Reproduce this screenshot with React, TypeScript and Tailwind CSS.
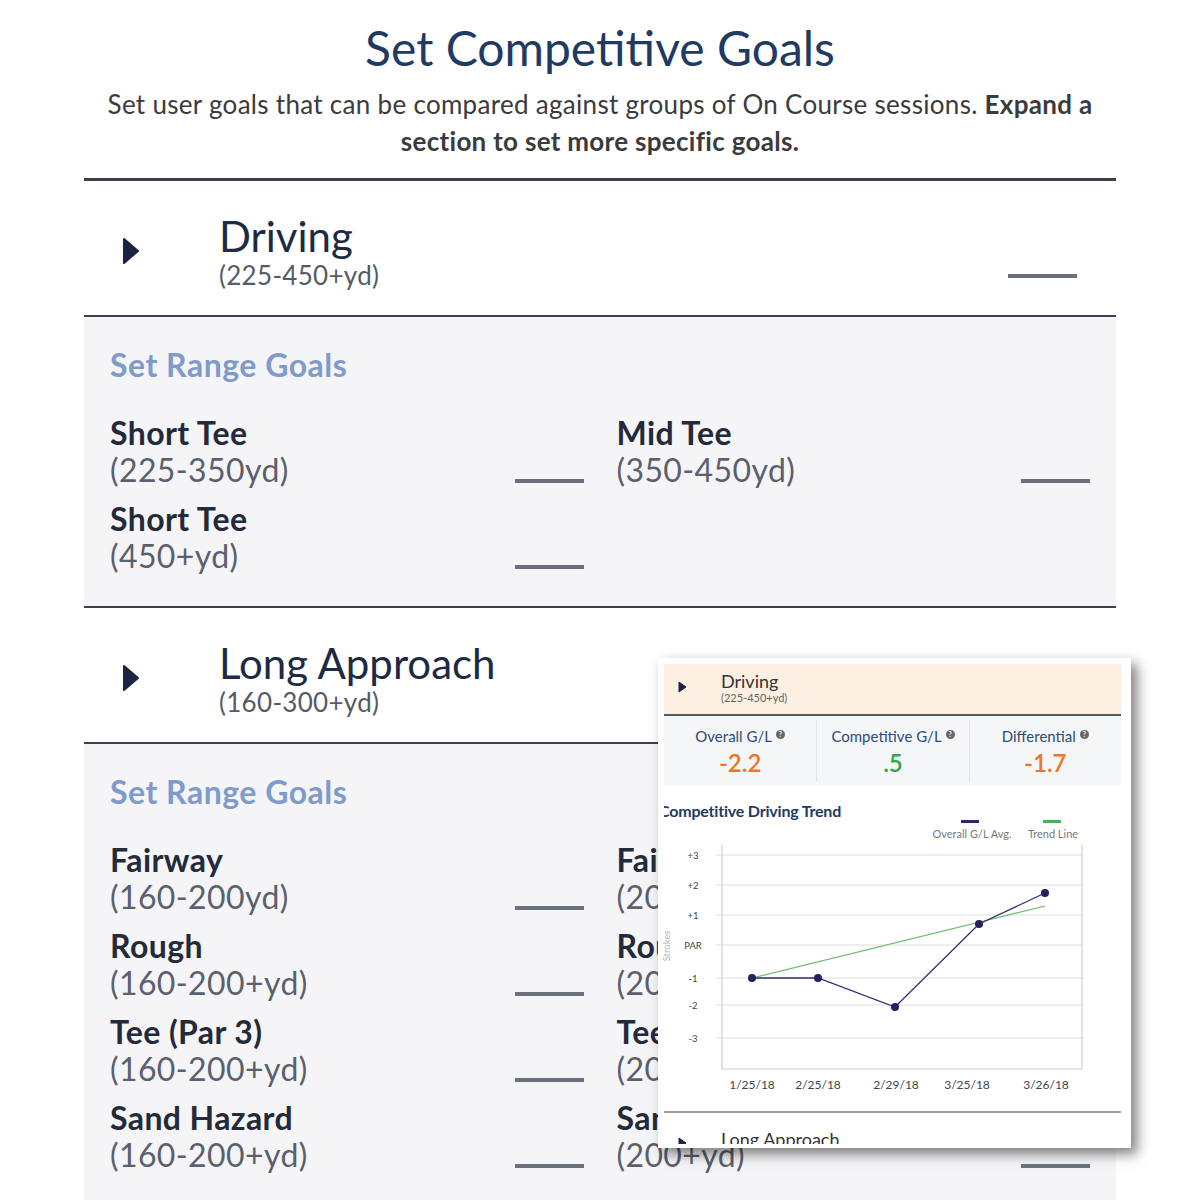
import React from 'react';

interface Goal {
  name: string;
  range: string;
}

interface SectionProps {
  title: string;
  range: string;
  goals: Goal[];
}

const drivingGoals: Goal[] = [
  { name: 'Short Tee', range: '(225-350yd)' },
  { name: 'Mid Tee', range: '(350-450yd)' },
  { name: 'Short Tee', range: '(450+yd)' },
];

const approachGoals: Goal[] = [
  { name: 'Fairway', range: '(160-200yd)' },
  { name: 'Fairway', range: '(200+yd)' },
  { name: 'Rough', range: '(160-200+yd)' },
  { name: 'Rough', range: '(200+yd)' },
  { name: 'Tee (Par 3)', range: '(160-200+yd)' },
  { name: 'Tee (Par 3)', range: '(200+yd)' },
  { name: 'Sand Hazard', range: '(160-200+yd)' },
  { name: 'Sand Hazard', range: '(200+yd)' },
];

function Caret({ small }: { small?: boolean }) {
  return small ? (
    <svg width="9" height="12" viewBox="0 0 9 12" className="shrink-0">
      <path d="M1 1 L8 6 L1 11 Z" fill="#1b2440" stroke="#1b2440" strokeLinejoin="round" />
    </svg>
  ) : (
    <svg width="18" height="28" viewBox="0 0 18 28" className="shrink-0">
      <path d="M2 2 L16 14 L2 26 Z" fill="#1b2440" stroke="#1b2440" strokeWidth="2" strokeLinejoin="round" />
    </svg>
  );
}

function Dash() {
  return <div className="h-[4px] w-[69px] shrink-0 bg-[#6b707d]" />;
}

function GoalRow({ name, range }: Goal) {
  return (
    <div className="flex items-end justify-between">
      <div>
        <div className="text-[32px] font-bold leading-[37px] tracking-[0.4px] text-[#232a3a]">{name}</div>
        <div className="text-[32px] leading-[37px] tracking-[0.4px] text-[#5a606c]">{range}</div>
      </div>
      <div className="mb-[5px]">
        <Dash />
      </div>
    </div>
  );
}

function Section({ title, range, goals }: SectionProps) {
  return (
    <div>
      <div className="flex h-[136px] items-start border-b-2 border-[#3b4150] pl-[38px] pr-[39px]">
        <div className="mt-[56px]">
          <Caret />
        </div>
        <div className="ml-[79px] flex-1 pt-[35px]">
          <div className="text-[42px] leading-[40px] text-[#1e2a44]">{title}</div>
          <div className="mt-[2px] text-[26px] leading-[34px] tracking-[0.3px] text-[#555b66]">{range}</div>
        </div>
        <div className="mt-[93px]">
          <Dash />
        </div>
      </div>
      <div className="border-b-2 border-[#3b4150] bg-[#f5f5f7] px-[26px] pb-[32px] pt-[28px]">
        <div className="text-[32px] font-bold leading-[40px] tracking-[0.5px] text-[#7f9bcb]">Set Range Goals</div>
        <div className="mt-[29px] grid grid-cols-2 gap-x-[33px] gap-y-[12px]">
          {goals.map((g, i) => (
            <GoalRow key={i} name={g.name} range={g.range} />
          ))}
        </div>
      </div>
    </div>
  );
}

function HelpDot() {
  return (
    <span className="ml-[4px] inline-flex h-[9px] w-[9px] -translate-y-[5px] items-center justify-center rounded-full bg-[#666] text-[7px] font-bold leading-none text-white">
      ?
    </span>
  );
}

function Stat({ label, value, color, first }: { label: string; value: string; color: string; first?: boolean }) {
  return (
    <div className={first ? 'flex flex-col items-center pt-[6px]' : 'flex flex-col items-center border-l border-[#e4e4e8] pt-[6px]'}>
      <div className="text-[15px] leading-[20px] text-[#2d4b74]">
        {label}
        <HelpDot />
      </div>
      <div className={`text-[24px] font-semibold leading-[34px] ${color}`}>{value}</div>
    </div>
  );
}

const yTicks = [
  { label: '+3', y: 36 },
  { label: '+2', y: 66 },
  { label: '+1', y: 96 },
  { label: 'PAR', y: 126 },
  { label: '-1', y: 159 },
  { label: '-2', y: 186 },
  { label: '-3', y: 219 },
];

const dates = [
  { label: '1/25/18', x: 94 },
  { label: '2/25/18', x: 160 },
  { label: '2/29/18', x: 238 },
  { label: '3/25/18', x: 309 },
  { label: '3/26/18', x: 388 },
];

const points = [
  [94, 159],
  [160, 159],
  [237, 188],
  [321, 105],
  [387, 74],
];

function TrendChart() {
  return (
    <svg width="469" height="287" viewBox="0 0 469 287" className="-ml-[6px] block">
      <rect x="303" y="1" width="18" height="3" fill="#2b2a6b" />
      <rect x="385" y="1" width="18" height="3" fill="#4cb050" />
      <text x="314" y="19" textAnchor="middle" fontSize="11" fill="#7a7a7a" fontFamily="Lato, sans-serif">
        Overall G/L Avg.
      </text>
      <text x="395" y="19" textAnchor="middle" fontSize="11" fill="#7a7a7a" fontFamily="Lato, sans-serif">
        Trend Line
      </text>

      {yTicks.map((t) => (
        <g key={t.label}>
          <line x1="58" y1={t.y} x2="424" y2={t.y} stroke="#dedede" strokeWidth="1" />
          <text x="35" y={t.y + 3.5} textAnchor="middle" fontSize="9.5" fill="#444" fontFamily="Lato, sans-serif">
            {t.label}
          </text>
        </g>
      ))}
      <path d="M64 26 V250 H424 V26" fill="none" stroke="#cfcfcf" strokeWidth="1.2" />
      <text
        x="12"
        y="127"
        textAnchor="middle"
        fontSize="9.5"
        fill="#b5b5b5"
        fontFamily="Lato, sans-serif"
        transform="rotate(-90 12 127)"
      >
        Strokes
      </text>

      {dates.map((d) => (
        <text key={d.label} x={d.x} y="270" textAnchor="middle" fontSize="12" fill="#444" fontFamily="Lato, sans-serif">
          {d.label}
        </text>
      ))}

      <line x1="94" y1="159" x2="387" y2="87" stroke="#6cbf6c" strokeWidth="1.2" />
      <polyline
        points={points.map((p) => p.join(',')).join(' ')}
        fill="none"
        stroke="#2f2d72"
        strokeWidth="1.3"
      />
      {points.map((p, i) => (
        <circle key={i} cx={p[0]} cy={p[1]} r="4" fill="#23215e" />
      ))}
    </svg>
  );
}

function TrendCard() {
  return (
    <div className="absolute left-[574px] top-[658px] h-[490px] w-[473px] bg-white shadow-[6px_6px_12px_rgba(0,0,0,0.5)]">
      <div className="h-[486px] overflow-hidden pl-[6px] pr-[10px] pt-[6px]">
        <div className="flex h-[52px] items-start border-b-2 border-[#55585f] bg-[#fdefe1] pl-[14px]">
          <div className="mt-[17px]">
            <Caret small />
          </div>
          <div className="ml-[34px] pt-[6px]">
            <div className="text-[18px] leading-[22px] text-[#333]">Driving</div>
            <div className="text-[11px] leading-[12px] text-[#666]">(225-450+yd)</div>
          </div>
        </div>
        <div className="grid h-[70px] grid-cols-3 bg-[#f5f6f8] py-[4px]">
          <Stat first label="Overall G/L" value="-2.2" color="text-[#ec7526]" />
          <Stat label="Competitive G/L" value=".5" color="text-[#2ea64b]" />
          <Stat label="Differential" value="-1.7" color="text-[#ec7526]" />
        </div>
        <div className="mt-[15px] overflow-hidden">
          <div className="-ml-[5px] whitespace-nowrap text-[16px] font-bold leading-[20px] tracking-[-0.2px] text-[#1f3b64]">
            Competitive Driving Trend
          </div>
        </div>
        <div className="-mt-[2px]">
          <TrendChart />
        </div>
        <div className="mt-[5px] border-t-2 border-[#a0a0a4]" />
        <div className="mt-[15px] flex items-start pl-[14px]">
          <div className="mt-[9px]">
            <Caret small />
          </div>
          <div className="ml-[34px] text-[18px] leading-[22px] text-[#333]">Long Approach</div>
        </div>
      </div>
    </div>
  );
}

export default function App() {
  return (
    <div className="min-h-[1200px] overflow-hidden bg-white font-['Lato','Open_Sans',sans-serif]">
      <div className="relative mx-auto w-[1032px]">
        <h1 className="pt-[19px] text-center text-[48px] leading-[58px] text-[#1f3b64]">Set Competitive Goals</h1>
        <p className="mt-[9px] whitespace-nowrap text-center text-[26px] leading-[37px] tracking-[0.3px] text-[#3b3b3b]">
          Set user goals that can be compared against groups of On Course sessions.{' '}
          <b>
            Expand a
            <br />
            section to set more specific goals.
          </b>
        </p>
        <div className="mt-[18px] border-t-[3px] border-[#3b3f47]" />
        <Section title="Driving" range="(225-450+yd)" goals={drivingGoals} />
        <Section title="Long Approach" range="(160-300+yd)" goals={approachGoals} />
        <TrendCard />
      </div>
    </div>
  );
}
